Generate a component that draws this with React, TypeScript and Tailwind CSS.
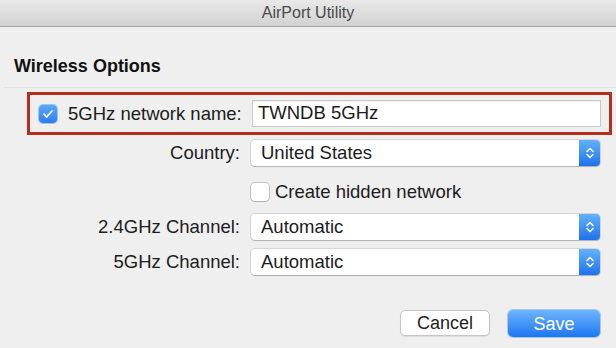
import React from "react";

const Chevrons = () => (
  <svg width="10" height="16" viewBox="0 0 10 16" fill="none" stroke="white" strokeWidth="1.6" strokeLinecap="round" strokeLinejoin="round">
    <path d="M2 6.5 L5 3.5 L8 6.5" />
    <path d="M2 9.5 L5 12.5 L8 9.5" />
  </svg>
);

const Select = ({ value }: { value: string }) => (
  <div className="flex h-[26px] w-[349px] rounded-[4px] bg-white shadow-[0_0_0_1px_rgba(0,0,0,0.1),0_1px_1px_rgba(0,0,0,0.18)]">
    <div className="flex flex-1 items-center pl-[10px] text-[18.5px] leading-none">{value}</div>
    <div className="flex w-[21px] items-center justify-center rounded-r-[4px] bg-gradient-to-b from-[#63b1fb] to-[#1c72ec]">
      <Chevrons />
    </div>
  </div>
);

const Checkbox = ({ checked }: { checked?: boolean }) =>
  checked ? (
    <div className="flex h-[18px] w-[18px] items-center justify-center rounded-[4px] bg-gradient-to-b from-[#5aa8fa] to-[#2a7ff0] shadow-[0_0_0_1px_rgba(30,100,210,0.35)]">
      <svg width="12" height="10" viewBox="0 0 12 10" fill="none" stroke="white" strokeWidth="1.8" strokeLinecap="round" strokeLinejoin="round">
        <path d="M2 5.2 L4.6 8 L10 2" />
      </svg>
    </div>
  ) : (
    <div className="h-[18px] w-[18px] rounded-[4px] bg-white shadow-[0_0_0_1px_rgba(0,0,0,0.18),0_1px_1px_rgba(0,0,0,0.1)]" />
  );

const Row = ({ label, children, className }: { label: string; children: React.ReactNode; className: string }) => (
  <div className={`ml-[30px] flex h-[26px] items-center gap-[11px] ${className}`}>
    <div className="w-[210px] whitespace-nowrap text-right text-[18.5px] leading-[26px]">{label}</div>
    {children}
  </div>
);

export default function App() {
  return (
    <div className="h-[348px] w-[616px] overflow-hidden bg-[#efefef] font-['Liberation_Sans',Arial,sans-serif] text-[#1c1c1c]">
      {/* Title bar */}
      <div className="h-[27px] border-b border-[#a4a4a4] bg-gradient-to-b from-[#e9e9e9] to-[#d2d2d2] text-center text-[16px] leading-[26px] text-[#4a4a4a]">
        AirPort Utility
      </div>

      <div className="mt-[28px] pl-[14px] text-[18px] font-bold leading-[22px] text-[#111]">Wireless Options</div>
      <div className="ml-[4px] mt-[10px] h-px bg-[#e0e0e0]" />

      {/* Highlighted network name */}
      <div className="ml-[27px] mt-[4px] flex h-[43px] w-[585px] items-center border-[3px] border-[#b3301f] pl-[9px]">
        <Checkbox checked />
        <div className="ml-[11px] w-[173px] whitespace-nowrap text-right text-[18.5px] leading-[26px]">5GHz network name:</div>
        <div className="ml-[11px] flex h-[27px] w-[349px] items-center border border-[#c9c9c9] bg-white pl-[5px] text-[18.5px] leading-none shadow-[inset_0_1px_0_rgba(0,0,0,0.06)]">
          TWNDB 5GHz
        </div>
      </div>

      <Row label="Country:" className="mt-[5px]">
        <Select value="United States" />
      </Row>

      <Row label="" className="mt-[13px]">
        <div className="flex items-center gap-[6px]">
          <Checkbox />
          <span className="text-[18.5px] leading-[26px]">Create hidden network</span>
        </div>
      </Row>

      <Row label="2.4GHz Channel:" className="mt-[9px]">
        <Select value="Automatic" />
      </Row>

      <Row label="5GHz Channel:" className="mt-[9px]">
        <Select value="Automatic" />
      </Row>

      {/* Buttons */}
      <div className="mt-[35px] flex justify-end gap-[18px] pr-[16px]">
        <button className="h-[26px] w-[90px] rounded-[5px] border border-[#c6c6c6] bg-white text-[18px] leading-none text-[#222] shadow-[0_1px_1px_rgba(0,0,0,0.08)]">
          Cancel
        </button>
        <button className="h-[27px] w-[92px] rounded-[5px] bg-gradient-to-b from-[#6cb4fb] to-[#1b76f2] text-[18px] leading-none text-white shadow-[0_0_0_1px_rgba(20,100,220,0.3)]">
          Save
        </button>
      </div>
    </div>
  );
}
